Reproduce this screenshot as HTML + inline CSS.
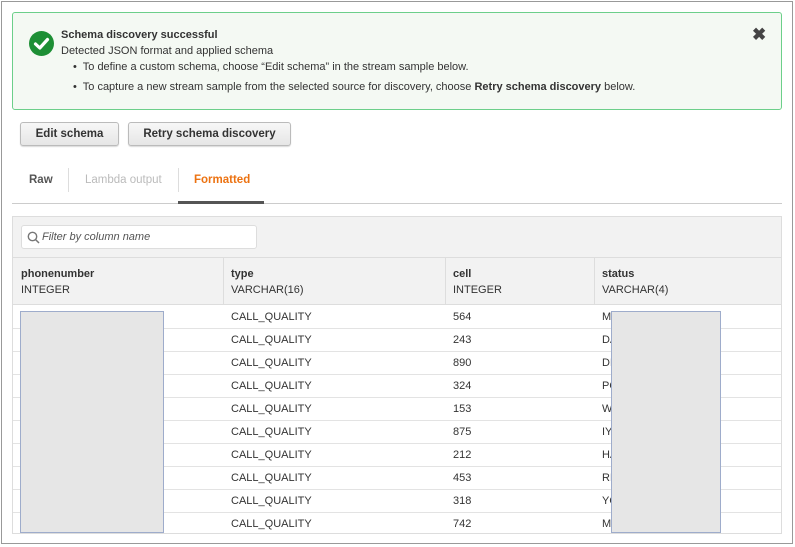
<!DOCTYPE html>
<html><head><style>
*{box-sizing:border-box;margin:0;padding:0}
body{width:795px;height:547px;background:#fff;font-family:"Liberation Sans",Arial,sans-serif;color:#333;position:relative;overflow:hidden}
.frame{position:absolute;left:1px;top:1px;width:792px;height:543px;border:1px solid #999}
.banner{position:absolute;left:12px;top:12px;width:770px;height:98px;border:1px solid #6ccf8a;border-radius:3px;background:#f4f9f3}
.abs{position:absolute;white-space:nowrap}
.btn{position:absolute;top:122px;height:24px;border:1px solid #bbb;border-radius:3px;background:linear-gradient(#f7f7f7,#e6e6e6);font-weight:bold;font-size:11.5px;color:#333;text-align:center;line-height:22px;box-shadow:0 1px 1px rgba(0,0,0,.15)}
.panel{position:absolute;left:12px;top:216px;width:770px;height:318px;border:1px solid #ddd;background:#fff}
.row{position:absolute;left:0;width:768px;height:23px;border-bottom:1px solid #e3e3e3;font-size:11px}
.row span{position:absolute;top:5px}
.red{position:absolute;top:311px;height:222px;background:#e6e6e6;border:1px solid #9eaccb}
</style></head><body>
<div class="frame"></div>
<div class="banner">
  <svg style="position:absolute;left:16px;top:18px" width="25" height="25" viewBox="0 0 25 25"><circle cx="12.5" cy="12.5" r="12.5" fill="#1d8f35"/><path d="M6.5 13 L10.8 17 L18.5 8.5" stroke="#fff" stroke-width="3.2" fill="none" stroke-linecap="round" stroke-linejoin="round"/></svg>
  <div class="abs" style="left:48px;top:16px;font-size:11px;font-weight:bold">Schema discovery successful</div>
  <div class="abs" style="left:48px;top:32px;font-size:11px">Detected JSON format and applied schema</div>
  <div class="abs" style="left:60px;top:48px;font-size:11px">•&nbsp; To define a custom schema, choose “Edit schema” in the stream sample below.</div>
  <div class="abs" style="left:60px;top:68px;font-size:11px">•&nbsp; To capture a new stream sample from the selected source for discovery, choose <b>Retry schema discovery</b> below.</div>
  <div class="abs" style="left:739px;top:12px;font-size:17px;font-weight:bold;color:#444">✖</div>
</div>
<div class="btn" style="left:20px;width:99px">Edit schema</div>
<div class="btn" style="left:128px;width:163px">Retry schema discovery</div>
<div class="abs" style="left:29px;top:174px;font-size:11.5px;font-weight:bold;color:#555">Raw</div>
<div class="abs" style="left:68px;top:168px;width:1px;height:24px;background:#ddd"></div>
<div class="abs" style="left:85px;top:174px;font-size:11.5px;color:#bbb">Lambda output</div>
<div class="abs" style="left:178px;top:168px;width:1px;height:24px;background:#ddd"></div>
<div class="abs" style="left:194px;top:174px;font-size:11.5px;font-weight:bold;color:#ec7211">Formatted</div>
<div class="abs" style="left:12px;top:203px;width:770px;height:1px;background:#ccc"></div>
<div class="abs" style="left:178px;top:201px;width:86px;height:3px;background:#555"></div>
<div class="panel">
  <div class="abs" style="left:0;top:0;width:768px;height:88px;background:#f2f2f2;border-bottom:1px solid #ddd"></div>
  <div class="abs" style="left:0;top:40px;width:768px;height:1px;background:#ddd"></div>
  <div class="abs" style="left:8px;top:8px;width:236px;height:24px;background:#fff;border:1px solid #ddd;border-radius:3px">
    <svg style="position:absolute;left:5px;top:5px" width="13" height="13" viewBox="0 0 13 13"><circle cx="5.5" cy="5.5" r="4.2" stroke="#777" stroke-width="1.4" fill="none"/><path d="M8.6 8.6 L12 12" stroke="#777" stroke-width="1.5"/></svg>
    <span class="abs" style="left:20px;top:5px;font-size:11px;font-style:italic;color:#555">Filter by column name</span>
  </div>
  <div class="abs" style="left:210px;top:41px;width:1px;height:47px;background:#ddd"></div>
  <div class="abs" style="left:432px;top:41px;width:1px;height:47px;background:#ddd"></div>
  <div class="abs" style="left:581px;top:41px;width:1px;height:47px;background:#ddd"></div>
  <div class="abs" style="left:8px;top:51px;font-size:11px;font-weight:bold">phonenumber</div>
  <div class="abs" style="left:8px;top:67px;font-size:11px">INTEGER</div>
  <div class="abs" style="left:218px;top:51px;font-size:11px;font-weight:bold">type</div>
  <div class="abs" style="left:218px;top:67px;font-size:11px">VARCHAR(16)</div>
  <div class="abs" style="left:440px;top:51px;font-size:11px;font-weight:bold">cell</div>
  <div class="abs" style="left:440px;top:67px;font-size:11px">INTEGER</div>
  <div class="abs" style="left:589px;top:51px;font-size:11px;font-weight:bold">status</div>
  <div class="abs" style="left:589px;top:67px;font-size:11px">VARCHAR(4)</div>
  <div class="row" style="top:89px"><span style="left:218px">CALL_QUALITY</span><span style="left:440px">564</span><span style="left:589px">MA</span></div>
  <div class="row" style="top:112px"><span style="left:218px">CALL_QUALITY</span><span style="left:440px">243</span><span style="left:589px">DA</span></div>
  <div class="row" style="top:135px"><span style="left:218px">CALL_QUALITY</span><span style="left:440px">890</span><span style="left:589px">DE</span></div>
  <div class="row" style="top:158px"><span style="left:218px">CALL_QUALITY</span><span style="left:440px">324</span><span style="left:589px">PO</span></div>
  <div class="row" style="top:181px"><span style="left:218px">CALL_QUALITY</span><span style="left:440px">153</span><span style="left:589px">WA</span></div>
  <div class="row" style="top:204px"><span style="left:218px">CALL_QUALITY</span><span style="left:440px">875</span><span style="left:589px">IY</span></div>
  <div class="row" style="top:227px"><span style="left:218px">CALL_QUALITY</span><span style="left:440px">212</span><span style="left:589px">HA</span></div>
  <div class="row" style="top:250px"><span style="left:218px">CALL_QUALITY</span><span style="left:440px">453</span><span style="left:589px">RE</span></div>
  <div class="row" style="top:273px"><span style="left:218px">CALL_QUALITY</span><span style="left:440px">318</span><span style="left:589px">YO</span></div>
  <div class="row" style="top:296px;border-bottom:none"><span style="left:218px">CALL_QUALITY</span><span style="left:440px">742</span><span style="left:589px">MA</span></div>
</div>
<div class="red" style="left:20px;width:144px"></div>
<div class="red" style="left:611px;width:110px"></div>
</body></html>
